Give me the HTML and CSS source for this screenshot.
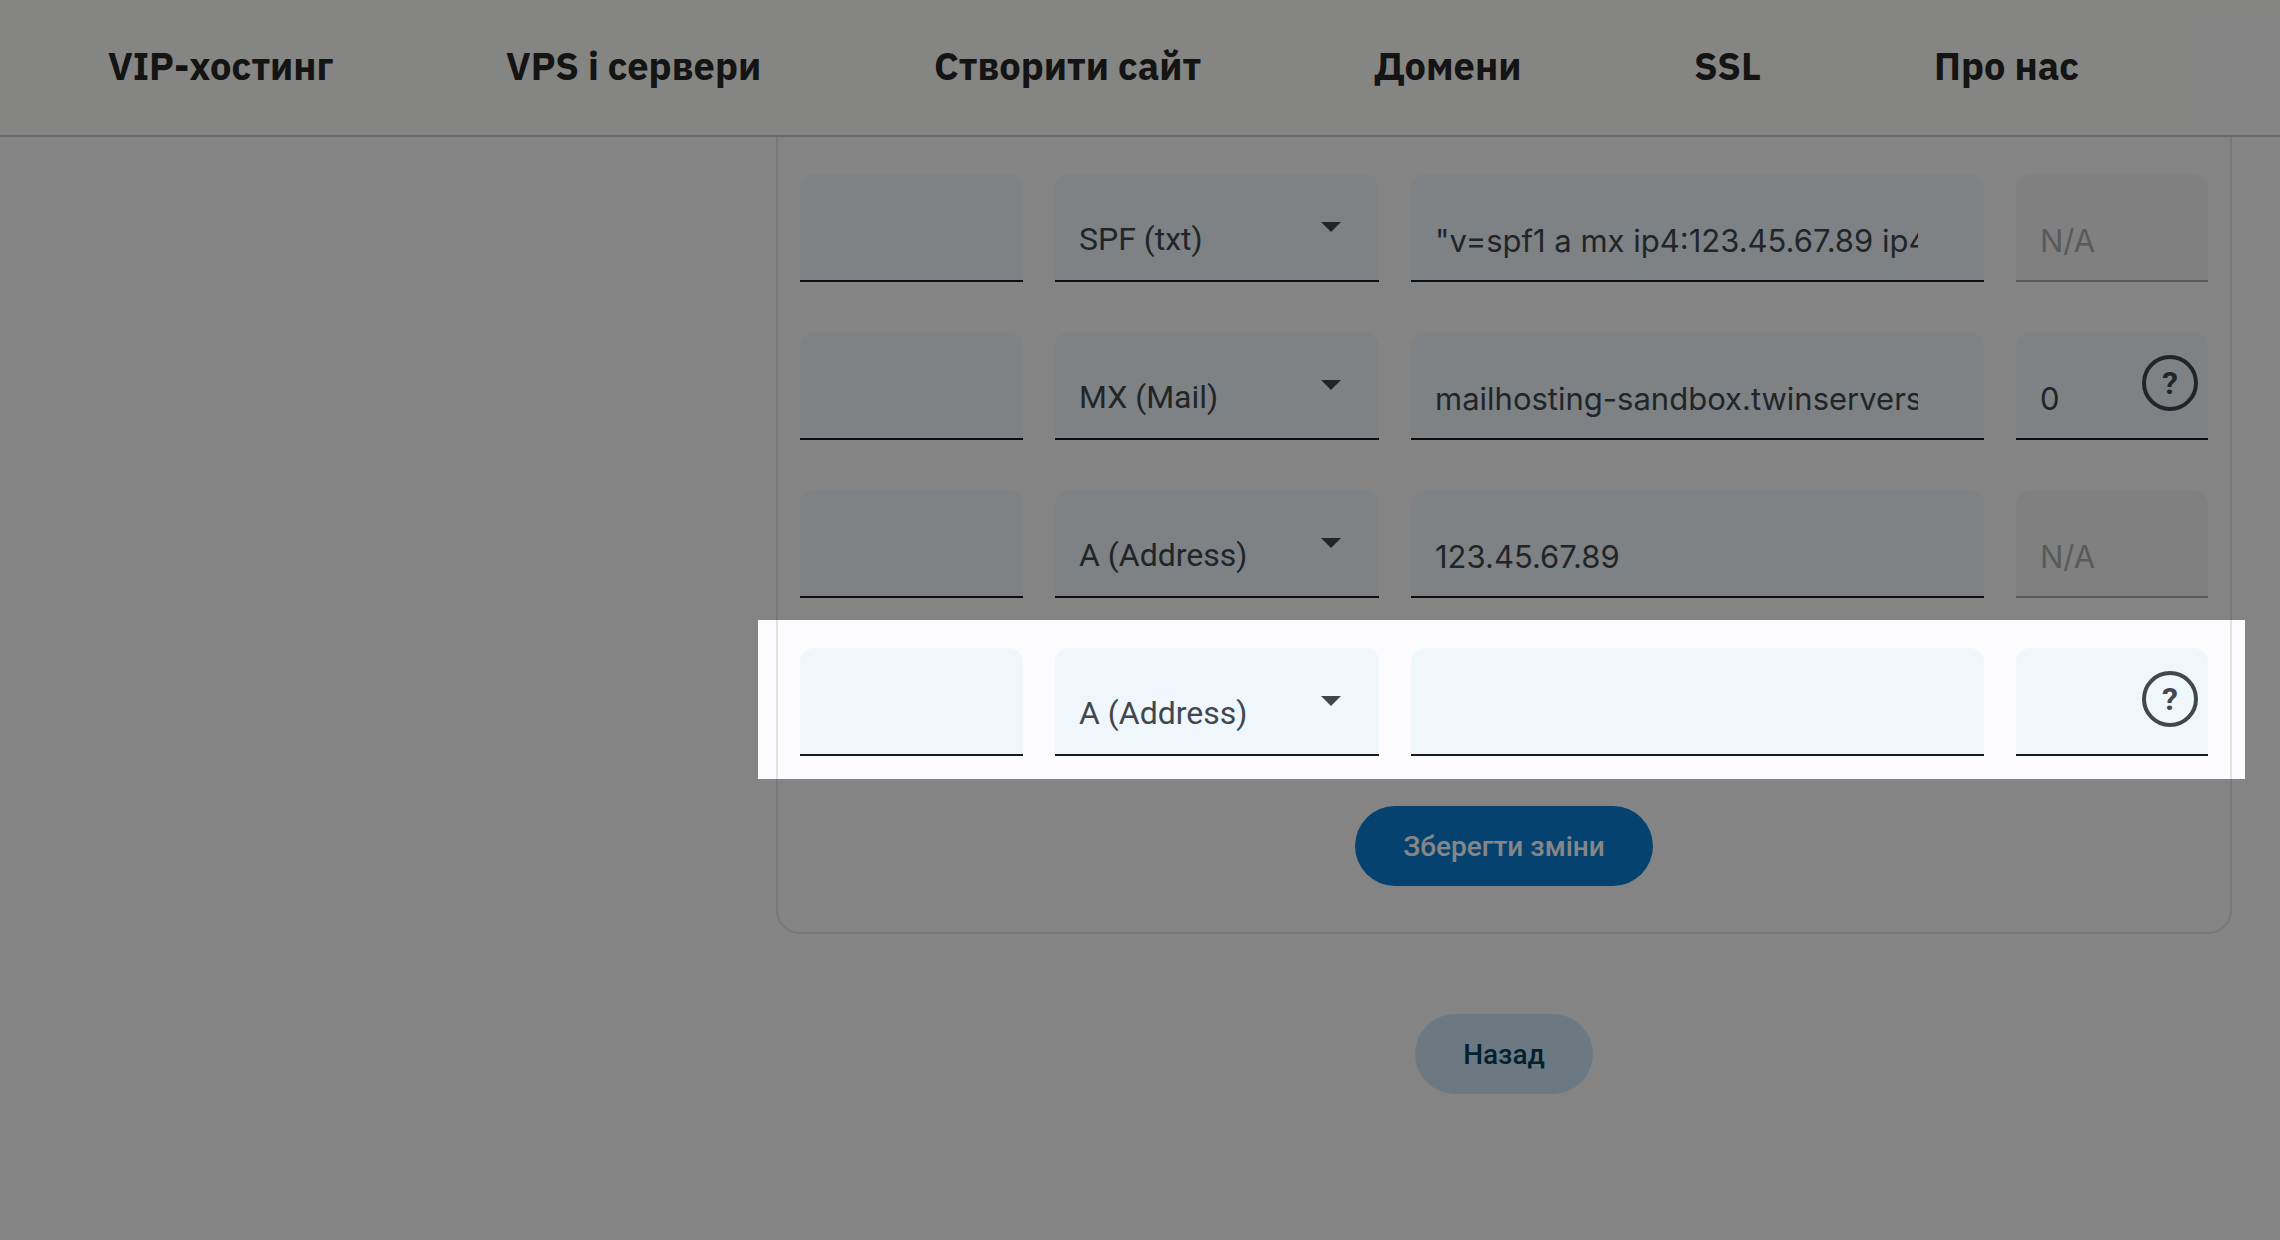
FILE: index.html
```html
<!DOCTYPE html>
<html lang="uk">
<head>
    <meta charset="utf-8">
    <meta name="viewport" content="width=device-width, initial-scale=1">
    <title>DNS</title>
    <link rel="stylesheet" href="styles.css">
</head>
<body>
    <header class="header">
        <nav class="nav">
            <a href="#">VIP-хостинг</a>
            <a href="#">VPS і сервери</a>
            <a href="#">Створити сайт</a>
            <a href="#">Домени</a>
            <a href="#">SSL</a>
            <a href="#">Про нас</a>
        </nav>
        <div class="header-end"></div>
    </header>

    <main class="main">
        <form class="panel">
            <div class="row">
                <input class="field" type="text" aria-label="Назва">
                <div class="cell">
                    <select class="field" aria-label="Тип">
                        <option>SPF (txt)</option>
                        <option>MX (Mail)</option>
                        <option>A (Address)</option>
                    </select>
                    <svg class="arrow" viewBox="0 0 20 10"><path d="M0 0h20L10 10z"/></svg>
                </div>
                <input class="field value" type="text" aria-label="Значення" value='"v=spf1 a mx ip4:123.45.67.89 ip4:123.45.67.90 ~all'>
                <input class="field" type="text" aria-label="Пріоритет" value="N/A" disabled>
            </div>
            <div class="row">
                <input class="field" type="text" aria-label="Назва">
                <div class="cell">
                    <select class="field" aria-label="Тип">
                        <option>MX (Mail)</option>
                        <option>SPF (txt)</option>
                        <option>A (Address)</option>
                    </select>
                    <svg class="arrow" viewBox="0 0 20 10"><path d="M0 0h20L10 10z"/></svg>
                </div>
                <input class="field value" type="text" aria-label="Значення" value="mailhosting-sandbox.twinservers.net">
                <div class="cell">
                    <input class="field" type="text" aria-label="Пріоритет" value="0">
                    <button class="help" type="button">?</button>
                </div>
            </div>
            <div class="row">
                <input class="field" type="text" aria-label="Назва">
                <div class="cell">
                    <select class="field" aria-label="Тип">
                        <option>A (Address)</option>
                        <option>MX (Mail)</option>
                        <option>SPF (txt)</option>
                    </select>
                    <svg class="arrow" viewBox="0 0 20 10"><path d="M0 0h20L10 10z"/></svg>
                </div>
                <input class="field value" type="text" aria-label="Значення" value="123.45.67.89">
                <input class="field" type="text" aria-label="Пріоритет" value="N/A" disabled>
            </div>
            <div class="row">
                <input class="field" type="text" aria-label="Назва">
                <div class="cell">
                    <select class="field" aria-label="Тип">
                        <option>A (Address)</option>
                        <option>MX (Mail)</option>
                        <option>SPF (txt)</option>
                    </select>
                    <svg class="arrow" viewBox="0 0 20 10"><path d="M0 0h20L10 10z"/></svg>
                </div>
                <input class="field value" type="text" aria-label="Значення">
                <div class="cell">
                    <input class="field" type="text" aria-label="Пріоритет">
                    <button class="help" type="button">?</button>
                </div>
                <div class="spotlight"></div>
            </div>
            <button class="btn save" type="submit">Зберегти зміни</button>
        </form>
        <button class="btn back" type="button">Назад</button>
    </main>
</body>
</html>
```
FILE: styles.css
```css
*{
    box-sizing: border-box;
}
body{
    margin: 0;
    min-height: 100vh;
    background-color: #fcfcfe;
    font-family: Roboto, sans-serif;
    color: #41474d;
}

.header{
    display: flex;
    align-items: center;
    height: 137px;
    padding-left: 108px;
    background-color: #fdfdf9;
    border-bottom: 2px solid #cacac8;
}
.nav{
    flex: 1;
    display: grid;
    grid-template-columns: 398fr 428fr 440fr 320fr 240fr 255fr;
    padding-bottom: 4px;
}
.nav a{
    font-family: "IBM Plex Sans", "Noto Sans", sans-serif;
    font-size: 38px;
    line-height: 48px;
    font-weight: bold;
    color: #262626;
    text-decoration: none;
    white-space: nowrap;
}
.header-end{
    width: 91px;
    height: 106px;
    background-color: #fcfcfd;
}

.main{
    display: flex;
    flex-direction: column;
    align-items: center;
    gap: 80px;
    padding: 0 48px 80px 776px;
}
.panel{
    display: flex;
    flex-direction: column;
    gap: 50px;
    width: 100%;
    padding: 37px 22px 46px;
    border: 2px solid #dee4ea;
    border-top: 0;
    border-radius: 0 0 24px 24px;
}
.row{
    position: relative;
    display: grid;
    grid-template-columns: 223fr 324fr 573fr 192fr;
    gap: 32px;
}
.cell{
    position: relative;
}
.field{
    display: block;
    width: 100%;
    min-width: 0;
    height: 108px;
    margin: 0;
    padding: 26px 24px 0;
    border: 0;
    border-bottom: 2px solid #1c1b1f;
    border-radius: 14px 14px 0 0;
    background-color: #eff7fd;
    font-family: Inter, sans-serif;
    font-size: 31px;
    color: #41474d;
    outline: none;
}
.value{
    padding-right: 66px;
}
select.field{
    appearance: none;
    padding-top: 24px;
    font-family: Roboto, sans-serif;
    font-size: 32px;
}
.field:disabled{
    background-color: #f4f4f4;
    border-color: #acacac;
    color: #acacac;
}
.arrow{
    position: absolute;
    top: 48px;
    right: 38px;
    width: 20px;
    height: 10px;
    fill: #41474d;
    pointer-events: none;
}
.help{
    position: absolute;
    top: 23px;
    right: 10px;
    width: 56px;
    height: 56px;
    padding: 0;
    border: 4px solid #41474d;
    border-radius: 50%;
    background-color: transparent;
    font-family: Roboto, sans-serif;
    font-size: 32px;
    line-height: 48px;
    font-weight: bold;
    color: #41474d;
}

.btn{
    height: 80px;
    padding: 0 48px;
    border: 0;
    border-radius: 40px;
    font-family: Roboto, sans-serif;
    font-size: 28px;
    font-weight: 500;
    cursor: pointer;
}
.save{
    align-self: center;
    background-color: #0b7fd5;
    color: #fff;
}
.back{
    background-color: #cde6fa;
    color: #064059;
}

/* everything outside of the highlighted row is dimmed */
.spotlight{
    position: absolute;
    top: -28px;
    right: -37px;
    bottom: -23px;
    left: -42px;
    z-index: 10;
    box-shadow: 0 0 0 3000px rgba(0, 0, 0, 0.475);
    pointer-events: none;
}
```
